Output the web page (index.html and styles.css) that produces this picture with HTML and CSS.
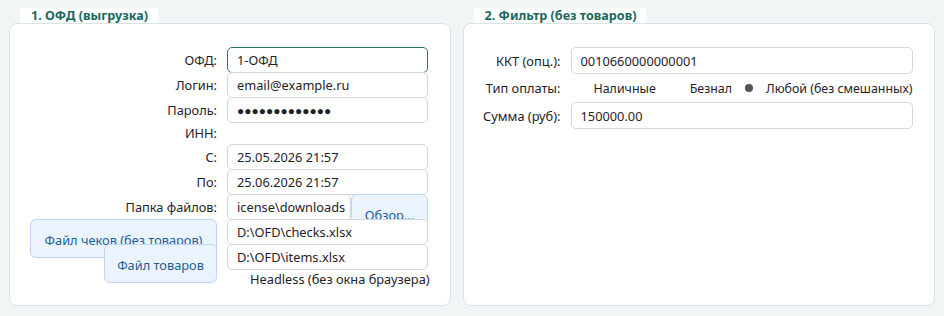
FILE: index.html
```html
<!DOCTYPE html>
<html lang="ru">
<head>
    <meta charset="UTF-8">
    <title>Выгрузка ОФД</title>
    <link rel="stylesheet" href="styles.css">
</head>
<body>

<div class="page">

    <div class="group group-ofd">
        <div class="group-title">1. ОФД (выгрузка)</div>
        <div class="group-body">
            <div class="form form-ofd">
                <label class="lbl">ОФД:</label>
                <input class="field focused" type="text" value="1-ОФД">

                <label class="lbl">Логин:</label>
                <input class="field" type="text" value="email@example.ru">

                <label class="lbl">Пароль:</label>
                <input class="field pass" type="text" value="●●●●●●●●●●●●●">

                <label class="lbl">ИНН:</label>
                <span></span>

                <label class="lbl">С:</label>
                <input class="field" type="text" value="25.05.2026 21:57">

                <label class="lbl">По:</label>
                <input class="field" type="text" value="25.06.2026 21:57">

                <label class="lbl">Папка файлов:</label>
                <div class="folder">
                    <input class="field folder-path" type="text" value="icense\downloads">
                    <button class="btn btn-browse">Обзор...</button>
                </div>

                <button class="btn btn-checks">Файл чеков (без товаров)</button>
                <input class="field" type="text" value="D:\OFD\checks.xlsx">

                <button class="btn btn-items">Файл товаров</button>
                <input class="field" type="text" value="D:\OFD\items.xlsx">

                <span></span>
                <label class="check">Headless (без окна браузера)</label>
            </div>
        </div>
    </div>

    <div class="group group-filter">
        <div class="group-title">2. Фильтр (без товаров)</div>
        <div class="group-body">
            <div class="form form-filter">
                <label class="lbl">ККТ (опц.):</label>
                <input class="field tall" type="text" value="0010660000000001">

                <label class="lbl">Тип оплаты:</label>
                <div class="radios">
                    <label class="radio">Наличные</label>
                    <label class="radio">Безнал</label>
                    <label class="radio checked">Любой (без смешанных)</label>
                </div>

                <label class="lbl">Сумма (руб):</label>
                <input class="field tall" type="text" value="150000.00">
            </div>
        </div>
    </div>

</div>

</body>
</html>
```

FILE: styles.css
```css
* {
    margin: 0;
    padding: 0;
    box-sizing: border-box;
}
body {
    background-color: #f2f5f6;
    font-family: "Noto Sans", "Open Sans", sans-serif;
    font-size: 12.8px;
    color: #1f2328;
}
.page {
    display: flex;
    gap: 12px;
    padding: 8px 9px 0 9px;
}
.group {
    display: flex;
    flex-direction: column;
}
.group-ofd {
    width: 442px;
}
.group-filter {
    width: 473px;
}
.group-title {
    align-self: flex-start;
    margin-left: 11px;
    padding: 0 10px 0 11px;
    height: 15px;
    line-height: 15px;
    background-color: #fff;
    font-size: 12.6px;
    font-weight: bold;
    color: #17695e;
}
.group-body {
    height: 283px;
    border: 1px solid #d9e2e5;
    border-radius: 8px;
    background-color: #fff;
}

/* сетка подпись / поле */
.form {
    display: grid;
    column-gap: 10px;
    padding-top: 23px;
}
.form-ofd {
    grid-template-columns: 207px 201px;
    grid-template-rows: 25px 25px 25px 22px 25px 25px 25px 25px 25px 20px;
}
.form-filter {
    grid-template-columns: 97px 342px;
    grid-template-rows: 27px 28px 27px;
}
.lbl {
    align-self: center;
    text-align: right;
    white-space: nowrap;
}
.field {
    align-self: start;
    height: 26px;
    width: 100%;
    padding: 0 9px;
    border: 1px solid #cfd7e0;
    border-radius: 5px;
    background-color: #fff;
    font-family: inherit;
    font-size: 12.8px;
    color: #1f2328;
    outline: none;
}
.field.tall {
    height: 27px;
}
.field.focused {
    border-color: #2a7a6c;
    background-color: #fff;
}
.field.pass {
    font-size: 12px;
    letter-spacing: 0;
}
.folder {
    display: flex;
    align-items: flex-start;
}
.folder-path {
    width: 124px;
    flex: none;
    padding-right: 0;
}

.btn {
    align-self: start;
    height: 39px;
    padding-top: 2px;
    border: 1px solid #bcd6f3;
    border-radius: 6px;
    background-color: #ebf3fe;
    font-family: inherit;
    font-size: 12.8px;
    color: #1d5d98;
    white-space: nowrap;
}
.btn-browse {
    width: 77px;
    flex: none;
}
.btn-checks {
    justify-self: end;
    width: 187px;
}
.btn-items {
    justify-self: end;
    width: 113px;
}

.check {
    align-self: center;
    padding-left: 23px;
    white-space: nowrap;
}

.radios {
    display: flex;
    align-items: center;
    gap: 11px;
    font-size: 12.4px;
}
.radio {
    display: flex;
    align-items: center;
    gap: 11px;
    white-space: nowrap;
}
.radio::before {
    content: "";
    width: 12px;
    height: 12px;
}
.radio.checked::before {
    width: 8px;
    height: 8px;
    margin: 0 2px;
    border-radius: 50%;
    background-color: #4e535d;
}
```
